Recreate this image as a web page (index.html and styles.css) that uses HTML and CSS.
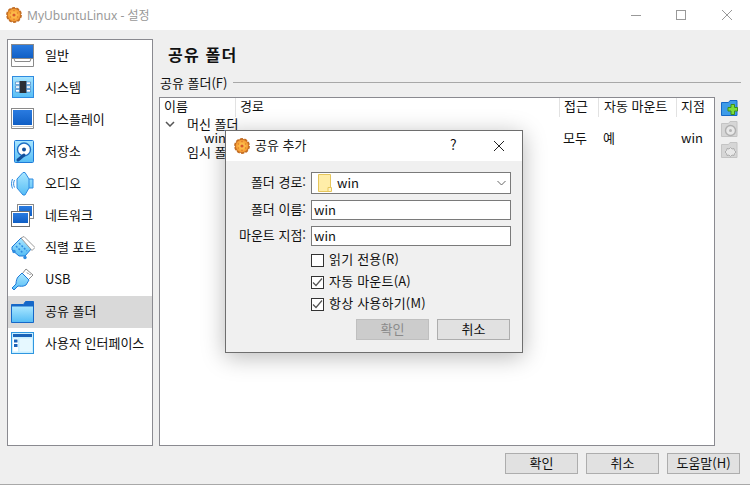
FILE: index.html
```html
<!DOCTYPE html>
<html lang="ko">
<head>
<meta charset="utf-8">
<title>MyUbuntuLinux - 설정</title>
<link rel="stylesheet" href="styles.css">
</head>
<body>
<svg class="defs" width="0" height="0" aria-hidden="true">
  <defs>
    <linearGradient id="scr" x1="0" y1="0" x2="0" y2="1"><stop offset="0" stop-color="#2a7be0"/><stop offset="1" stop-color="#0f5ec4"/></linearGradient>
    <linearGradient id="sky" x1="0" y1="0" x2="0" y2="1"><stop offset="0" stop-color="#a9e6ff"/><stop offset="1" stop-color="#56bdf5"/></linearGradient>
    <radialGradient id="vb" cx=".5" cy=".5" r=".55"><stop offset="0" stop-color="#ffd35a"/><stop offset=".7" stop-color="#f9a63a"/><stop offset="1" stop-color="#ee9230"/></radialGradient>
    <symbol id="vbox" viewBox="0 0 16 16">
      <circle cx="8" cy="8" r="7.200" fill="#c9762a"/>
      <circle cx="8" cy="8" r="7" fill="none" stroke="#c26c22" stroke-width="1.800" stroke-dasharray="3 1.400"/>
      <circle cx="8" cy="8" r="6.200" fill="url(#vb)"/>
      <circle cx="8" cy="8" r="1.600" fill="#d8572a"/>
      <circle cx="4.400" cy="6" r=".8" fill="#e07a2d"/><circle cx="11.600" cy="6" r=".8" fill="#e07a2d"/><circle cx="4.400" cy="10" r=".8" fill="#e07a2d"/><circle cx="11.600" cy="10" r=".8" fill="#e07a2d"/><circle cx="8" cy="3.600" r=".8" fill="#e07a2d"/><circle cx="8" cy="12.400" r=".8" fill="#e07a2d"/>
    </symbol>
  </defs>
</svg>
<div class="window">
  <header class="titlebar">
    <svg class="app-icon" width="16" height="16"><use href="#vbox"/></svg>
    <span class="title-text">MyUbuntuLinux - 설정</span>
    <div class="controls">
      <svg class="ctl" width="10" height="10" viewBox="0 0 10 10"><path d="M0 5.500h10" stroke="#999" fill="none"/></svg>
      <svg class="ctl" width="10" height="10" viewBox="0 0 10 10"><rect x=".5" y=".5" width="9" height="9" stroke="#999" fill="none"/></svg>
      <svg class="ctl ctl-close" width="10" height="10" viewBox="0 0 10 10"><path d="M0 0l10 10M10 0L0 10" stroke="#999" fill="none"/></svg>
    </div>
  </header>
  <div class="content">
    <nav class="sidebar">
      <div class="nav-item"><svg class="nav-icon" viewBox="0 0 24 24"><rect x=".5" y=".5" width="22" height="14" fill="url(#scr)" stroke="#8a8a8a"/><path d="M.5 14.500v8h22v-8h-2.500l-1 3H4l-1-3z" fill="#fff" stroke="#8a8a8a"/></svg><span>일반</span></div>
      <div class="nav-item"><svg class="nav-icon" viewBox="0 0 24 24"><rect x="1.500" y=".5" width="21" height="21" fill="url(#sky)" stroke="#2f8be0"/><rect x="8.500" y="5" width="7" height="12" fill="#2b2f36"/><path d="M4.500 6h4v2.500h-4zM4.500 9.800h4v2.500h-4zM4.500 13.500h4V16h-4zM15.500 6h4v2.500h-4zM15.500 9.800h4v2.500h-4zM15.500 13.500h4V16h-4z" fill="#fff" stroke="#1d5fae" stroke-width=".5"/></svg><span>시스템</span></div>
      <div class="nav-item"><svg class="nav-icon" viewBox="0 0 24 24"><rect x=".5" y=".5" width="22" height="18" fill="#fff" stroke="#8a8a8a"/><rect x="2" y="2" width="19" height="15" fill="url(#scr)"/><path d="M.5 18.500v2h22v-2" fill="#fff" stroke="#8a8a8a"/></svg><span>디스플레이</span></div>
      <div class="nav-item"><svg class="nav-icon" viewBox="0 0 24 24"><rect x="3.500" y=".5" width="19" height="22" rx="1" fill="url(#sky)" stroke="#1f7ad8"/><circle cx="13" cy="9.500" r="6.500" fill="#fff" stroke="#1f6fc4" stroke-width="1.400"/><circle cx="13" cy="9.500" r="2" fill="#124f9c"/><path d="M7 20l6-5" stroke="#124f9c" stroke-width="3" stroke-linecap="round"/></svg><span>저장소</span></div>
      <div class="nav-item"><svg class="nav-icon" viewBox="0 0 24 24"><path d="M6 7l6-6.500h2L18 7h4v9h-4l-4 7h-2l-6-7z" fill="url(#sky)" stroke="#2f8be0"/><path d="M18 7v9" stroke="#2f8be0"/><path d="M3.500 8c-1.200 2.500-1.200 5 0 7.500M1.500 7C.2 10 .2 13.500 1.500 16.500" fill="none" stroke="#2f8be0"/></svg><span>오디오</span></div>
      <div class="nav-item"><svg class="nav-icon" viewBox="0 0 24 24"><rect x="6.500" y=".5" width="16" height="14" fill="#fff" stroke="#8a8a8a"/><rect x="8" y="2" width="13" height="10" fill="url(#scr)"/><rect x=".5" y="7.500" width="18" height="15" fill="#fff" stroke="#6f6f6f"/><rect x="2" y="9" width="15" height="10" fill="url(#scr)"/></svg><span>네트워크</span></div>
      <div class="nav-item"><svg class="nav-icon" viewBox="0 0 24 24"><path d="M1 11L10 2l11 10-7 8H8l-7-6z" fill="url(#sky)" stroke="#1f7ad8"/><path d="M10 2l3-1.500 11 11-3 3z" fill="#fff" stroke="#9a9a9a"/><path d="M8 7l8 8M5 10l7 7" stroke="#2f8be0" stroke-width="1.500" stroke-dasharray="2 1.500"/><circle cx="3" cy="15.500" r="1.700" fill="#2f8be0"/><circle cx="14" cy="21.500" r="1.700" fill="#2f8be0"/></svg><span>직렬 포트</span></div>
      <div class="nav-item"><svg class="nav-icon" viewBox="0 0 24 24"><path d="M15 1l7 6-5 5-6-6z" fill="#fff" stroke="#8a8a8a"/><path d="M16 4.500l1.500 1.500M18.500 6l1 1" stroke="#777"/><path d="M11 5l7 7-3 5c-3 2-6 1-8 1l-4 4-2-2 4-4c0-3 1-6 2-7z" fill="url(#sky)" stroke="#1f7ad8"/></svg><span>USB</span></div>
      <div class="nav-item is-active"><svg class="nav-icon" viewBox="0 0 24 24"><path d="M.5 4.500h12l2-3h8v21H.5z" fill="#1668c8" stroke="#1668c8"/><path d="M1 6.500h21v15.500H1z" fill="url(#sky)"/></svg><span>공유 폴더</span></div>
      <div class="nav-item"><svg class="nav-icon" viewBox="0 0 24 24"><rect x=".5" y=".5" width="22" height="21" fill="#c9efff" stroke="#2f96e0"/><rect x="2" y="2" width="19" height="3" fill="#1a63b8"/><rect x="2" y="6.500" width="5" height="13" fill="#fff"/><rect x="3" y="7.500" width="3.500" height="3" fill="#1a63b8"/><rect x="3" y="12" width="3.500" height="3" fill="#1a63b8"/><rect x="8.500" y="6.500" width="12.500" height="13" fill="#e6f8ff"/></svg><span>사용자 인터페이스</span></div>
    </nav>
    <main class="main">
      <h1 class="page-title">공유 폴더</h1>
      <div class="group-head"><span>공유 폴더(F)</span><i class="group-line"></i></div>
      <div class="group-body">
        <div class="table">
          <div class="row head">
            <div class="cell c1">이름</div><div class="cell c2">경로</div><div class="cell c3">접근</div><div class="cell c4">자동 마운트</div><div class="cell c5">지점</div>
          </div>
          <div class="tree-row top-row">
            <svg class="chev" width="10" height="6" viewBox="0 0 10 6"><path d="M1 1l4 4 4-4" stroke="#555" stroke-width="1.500" fill="none"/></svg>
            <span class="tree-label">머신 폴더</span>
          </div>
          <div class="row data">
            <div class="cell c1 indent">win</div><div class="cell c2"></div><div class="cell c3">모두</div><div class="cell c4">예</div><div class="cell c5">win</div>
          </div>
          <div class="tree-row"><span class="tree-label">임시 폴더</span></div>
        </div>
        <div class="tools">
          <svg width="17" height="17" viewBox="0 0 17 17"><path d="M.5 2.500h7l1.500-2h7v15H.5z" fill="#3d9be8" stroke="#1668c8"/><path d="M7 7.500h3v-3h3.500v3h3v3.500h-3v3.500H10V11H7z" fill="#7bdc3c" stroke="#3f8f17"/></svg>
          <svg width="17" height="17" viewBox="0 0 17 17"><path d="M.5 2.500h7l1.500-2h7v15H.5z" fill="#d6d6d6" stroke="#c4c4c4"/><circle cx="9.500" cy="9.500" r="5" fill="#e8e8e8" stroke="#b0b0b0" stroke-width="1.400"/><circle cx="9.500" cy="9.500" r="1.500" fill="#b4b4b4"/></svg>
          <svg width="17" height="17" viewBox="0 0 17 17"><path d="M.5 2.500h7l1.500-2h7v15H.5z" fill="#d6d6d6" stroke="#c4c4c4"/><path d="M6 6.500l2 .5 1.500-1.500L11 7l2-.5.500 2L15 10l-1.500 1.500-.5 2-2-.5-1.500 1.500L8 13l-2 .5-.5-2L4 10l1.500-1.500z" fill="#e8e8e8" stroke="#aeaeae"/></svg>
        </div>
      </div>
    </main>
  </div>
  <footer class="footer">
    <button class="btn">확인</button><button class="btn">취소</button><button class="btn">도움말(H)</button>
  </footer>

  <section class="dialog">
    <div class="dlg-title">
      <svg class="dlg-icon" width="16" height="16"><use href="#vbox"/></svg>
      <span class="dlg-name">공유 추가</span>
      <span class="dlg-help">?</span>
      <svg class="dlg-close" width="12" height="12" viewBox="0 0 12 12"><path d="M1 1l10 10M11 1L1 11" stroke="#222" fill="none"/></svg>
    </div>
    <div class="dlg-body">
      <div class="form">
        <label class="f-label">폴더 경로:</label>
        <div class="combo">
          <svg width="14" height="18" viewBox="0 0 14 18"><path d="M.5.5h12v17H.5z" fill="#ffeda8" stroke="#e6c65c"/><path d="M10 13.500h3.500v4H10z" fill="#fff3c4" stroke="#e6c65c"/></svg>
          <span class="combo-text">win</span>
          <svg class="combo-arrow" width="9" height="6" viewBox="0 0 9 6"><path d="M.5 1l4 4 4-4" stroke="#666" fill="none"/></svg>
        </div>
        <label class="f-label">폴더 이름:</label>
        <div class="input"><span>win</span></div>
        <label class="f-label">마운트 지점:</label>
        <div class="input"><span>win</span></div>
      </div>
      <div class="checks">
        <div class="check"><span class="box"></span><span class="check-text">읽기 전용(R)</span></div>
        <div class="check"><span class="box"><svg width="11" height="11" viewBox="0 0 11 11"><path d="M1 5.500l3 3 6-7" stroke="#555" stroke-width="1.200" fill="none"/></svg></span><span class="check-text">자동 마운트(A)</span></div>
        <div class="check"><span class="box"><svg width="11" height="11" viewBox="0 0 11 11"><path d="M1 5.500l3 3 6-7" stroke="#555" stroke-width="1.200" fill="none"/></svg></span><span class="check-text">항상 사용하기(M)</span></div>
      </div>
      <div class="dlg-actions">
        <button class="btn is-disabled">확인</button><button class="btn">취소</button>
      </div>
    </div>
  </section>
</div>
</body>
</html>
```
FILE: styles.css
```css
* { box-sizing: border-box; }
html, body { margin: 0; padding: 0; }
body {
  font-family: "Noto Sans CJK KR", "Noto Sans", sans-serif;
  font-size: 13px;
  color: #111;
  background: #efefef;
}
.defs { position: absolute; }
.window {
  position: relative;
  width: 750px;
  height: 485px;
  display: flex;
  flex-direction: column;
  overflow: hidden;
  background: #efefef;
  border-bottom: 1px solid #a8a8a8;
}
.titlebar {
  flex: 0 0 30px;
  display: flex;
  align-items: center;
  background: #fff;
  padding-left: 6px;
}
.app-icon { margin-right: 5px; }
.title-text {
  font-family: "Noto Sans", "Noto Sans CJK KR", sans-serif;
  font-size: 12px;
  color: #999;
}
.controls {
  margin-left: auto;
  display: flex;
  gap: 35px;
  padding-right: 18px;
}
.ctl-close { margin-left: 1px; }
.content {
  flex: 1;
  display: flex;
  min-height: 0;
  padding: 9px 0 0 7px;
}
.sidebar {
  width: 146px;
  background: #fff;
  border: 1px solid #8a8a90;
}
.nav-item {
  height: 32px;
  display: flex;
  align-items: center;
  padding-left: 3px;
  gap: 10px;
  line-height: 1;
}
.nav-item span { padding-bottom: 4px; }
.nav-item.is-active { background: #d9d9d9; }
.nav-icon { width: 24px; height: 24px; flex: none; }
.main {
  flex: 1;
  display: flex;
  flex-direction: column;
  padding-left: 6px;
  min-width: 0;
}
.page-title {
  margin: 0;
  height: 33px;
  padding: 5px 0 0 9px;
  font-size: 16px;
  line-height: 20px;
  font-weight: 700;
  letter-spacing: 1.2px;
}
.group-head {
  height: 25px;
  display: flex;
  align-items: center;
  padding: 0 9px 5px 1px;
  gap: 6px;
  line-height: 1;
}
.group-line { flex: 1; height: 1px; background: #a8a8a8; }
.group-body { flex: 1; display: flex; min-height: 0; gap: 6px; }
.table {
  width: 556px;
  background: #fff;
  border: 1px solid #8a8a90;
  line-height: 13px;
}
.row {
  display: grid;
  grid-template-columns: 76px 324px 39px 78px 1fr;
}
.row.head { height: 19px; align-items: stretch; }
.row.head .cell { border-right: 1px solid #e2e2e2; padding: 0 0 0 4px; line-height: 16px; }
.row.head .cell:last-child { border-right: 0; }
.row.head .c4 { padding-left: 5px; }
.row.data { height: 14px; }
.row.data .cell { padding-left: 3px; }
.row.data .c4, .row.data .c5 { padding-left: 4px; }
.row.data .indent { padding-left: 44px; }
.tree-row { height: 14px; display: flex; align-items: flex-start; padding-left: 27px; position: relative; }
.chev { position: absolute; left: 5px; top: 4px; }
.tools { width: 17px; display: flex; flex-direction: column; gap: 4px; padding-top: 3px; }
.footer {
  flex: 0 0 38px;
  display: flex;
  justify-content: flex-end;
  gap: 8px;
  padding: 7px 10px 0 0;
}
.btn {
  width: 73px;
  height: 21px;
  padding: 0 0 2px;
  background: #e1e1e1;
  border: 1px solid #adadad;
  font: inherit;
  line-height: 15px;
  color: #111;
}
.btn.is-disabled { background: #ccc; border-color: #bfbfbf; color: #8a8a8a; }
.dialog {
  position: absolute;
  left: 225px;
  top: 130px;
  width: 298px;
  height: 223px;
  background: #f0f0f0;
  border: 1px solid #6e6e6e;
  box-shadow: 0 4px 22px rgba(0, 0, 0, .28);
  display: flex;
  flex-direction: column;
}
.dlg-title {
  flex: 0 0 30px;
  background: #fff;
  display: flex;
  align-items: center;
  padding-left: 8px;
}
.dlg-icon { margin-right: 5px; }
.dlg-name { flex: 1; color: #1a1a1a; padding-bottom: 4px; line-height: 1; }
.dlg-help { width: 38px; font-size: 14px; padding-bottom: 4px; line-height: 1; margin-left: 3px; }
.dlg-close { margin-right: 17px; margin-left: 5px; }
.dlg-body { flex: 1; display: flex; flex-direction: column; padding: 11px 11px 0 0; }
.form {
  display: grid;
  grid-template-columns: 80px 1fr;
  column-gap: 5px;
  row-gap: 6px;
  align-items: center;
}
.f-label { text-align: right; line-height: 1; padding-bottom: 4px; }
.combo, .input {
  height: 20px;
  background: #fff;
  border: 1px solid #7a7a7a;
  display: flex;
  align-items: center;
  padding-left: 2px;
  line-height: 1;
}
.input span, .combo-text { padding-bottom: 2px; }
.combo { height: 22px; padding-left: 6px; gap: 5px; }
.combo-text { flex: 1; }
.combo-arrow { margin-right: 4px; }
.checks { display: flex; flex-direction: column; gap: 8px; padding: 7px 0 0 85px; }
.check { display: flex; align-items: center; gap: 5px; height: 14px; line-height: 1; }
.check-text { padding-bottom: 4px; letter-spacing: .2px; }
.box {
  width: 13px;
  height: 13px;
  flex: none;
  background: #fff;
  border: 1px solid #333;
  display: flex;
  align-items: center;
  justify-content: center;
}
.dlg-actions { display: flex; justify-content: flex-end; gap: 8px; padding: 8px 1px 0 0; }
```
